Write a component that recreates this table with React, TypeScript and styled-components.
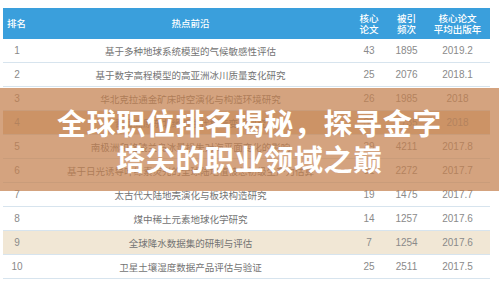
import React from 'react';
import styled, { createGlobalStyle } from 'styled-components';

const GlobalStyle = createGlobalStyle`
    html, body {
        margin: 0;
        padding: 0;
        background: #ffffff;
    }
    body {
        font-family: "Noto Sans CJK SC", "Noto Sans", sans-serif;
    }
`;

const Page = styled.div`
    position: relative;
    width: 499px;
    height: 286px;
    padding: 8px 9px 0 3px;
    box-sizing: border-box;
    overflow: hidden;
`;

const Grid = `
    display: grid;
    grid-template-columns: 28px 319px 38px 37px 65px;
    align-items: center;
`;

const HeaderRow = styled.div`
    ${Grid}
    height: 31px;
    background: #3a9fdc;
    color: #ffffff;
    font-size: 9.5px;
    line-height: 11px;
    font-weight: 500;
`;

const HeadCell = styled.div<{ $left?: boolean }>`
    text-align: ${p => (p.$left ? 'left' : 'center')};
    padding-left: ${p => (p.$left ? '4px' : '0')};
`;

const Row = styled.div<{ $tone?: 'beige' | 'dark' }>`
    ${Grid}
    height: 23px;
    border-bottom: 1px solid #d7e4ee;
    background: ${p =>
        p.$tone === 'beige' ? '#f1e7d5' : p.$tone === 'dark' ? '#e2c6a4' : 'transparent'};
    color: #737373;
    font-size: 9.5px;
`;

const Cell = styled.div`
    text-align: center;
    white-space: nowrap;
`;

const NumCell = styled(Cell)`
    font-family: "Liberation Sans Narrow", "Liberation Sans", sans-serif;
    font-size: 10px;
    color: #8a8a8a;
`;

const Overlay = styled.div`
    position: absolute;
    left: 0;
    right: 0;
    top: 88px;
    height: 103px;
    background: rgba(196, 128, 78, 0.72);
    display: flex;
    flex-direction: column;
    align-items: center;
    justify-content: center;
`;

const TitleLine = styled.div`
    color: #ffffff;
    font-size: 29px;
    letter-spacing: 0.6px;
    line-height: 36px;
    font-weight: 700;
    white-space: nowrap;
`;

type Front = {
    rank: number;
    topic: string;
    core: string;
    cites: string;
    year: string;
    tone?: 'beige' | 'dark';
};

const fronts: Front[] = [
    { rank: 1, topic: '基于多种地球系统模型的气候敏感性评估', core: '43', cites: '1895', year: '2019.2' },
    { rank: 2, topic: '基于数字高程模型的高亚洲冰川质量变化研究', core: '25', cites: '2076', year: '2018.1' },
    { rank: 3, topic: '华北克拉通金矿床时空演化与构造环境研究', core: '26', cites: '1985', year: '2018' },
    { rank: 4, topic: '青藏高原东北缘新生代构造变形研究', core: '30', cites: '1735', year: '2018', tone: 'dark' },
    { rank: 5, topic: '南极洲和格陵兰岛冰量损失对海平面变化的影响', core: '39', cites: '4211', year: '2017.8' },
    { rank: 6, topic: '基于日光诱导叶绿素荧光的全球陆地植被总初级生产力估算', core: '31', cites: '2272', year: '2017.7' },
    { rank: 7, topic: '太古代大陆地壳演化与板块构造研究', core: '19', cites: '1475', year: '2017.7' },
    { rank: 8, topic: '煤中稀土元素地球化学研究', core: '14', cites: '1257', year: '2017.6' },
    { rank: 9, topic: '全球降水数据集的研制与评估', core: '7', cites: '1254', year: '2017.6', tone: 'beige' },
    { rank: 10, topic: '卫星土壤湿度数据产品评估与验证', core: '25', cites: '2511', year: '2017.5' },
];

export default function App() {
    return (
        <Page>
            <GlobalStyle />
            <HeaderRow>
                <HeadCell $left>排名</HeadCell>
                <HeadCell>热点前沿</HeadCell>
                <HeadCell>核心<br />论文</HeadCell>
                <HeadCell>被引<br />频次</HeadCell>
                <HeadCell>核心论文<br />平均出版年</HeadCell>
            </HeaderRow>
            {fronts.map(f => (
                <Row key={f.rank} $tone={f.tone}>
                    <NumCell>{f.rank}</NumCell>
                    <Cell>{f.topic}</Cell>
                    <NumCell>{f.core}</NumCell>
                    <NumCell>{f.cites}</NumCell>
                    <NumCell>{f.year}</NumCell>
                </Row>
            ))}
            <Overlay>
                <TitleLine>全球职位排名揭秘，探寻金字</TitleLine>
                <TitleLine>塔尖的职业领域之巅</TitleLine>
            </Overlay>
        </Page>
    );
}
